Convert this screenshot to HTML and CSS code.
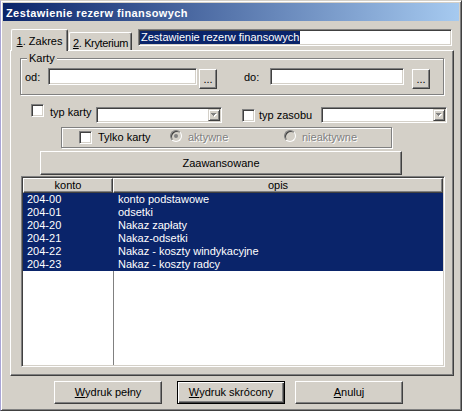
FILE: index.html
```html
<!DOCTYPE html>
<html lang="pl">
<head>
<meta charset="utf-8">
<title>Zestawienie rezerw finansowych</title>
<link rel="stylesheet" href="styles.css">
</head>
<body>
<div class="window">
  <div class="titlebar">Zestawienie rezerw finansowych</div>

  <div class="tabrow">
    <div class="tab tab-active"><span class="u">1</span>. Zakres</div>
    <div class="tab tab-second"><span class="u">2</span>. Kryterium</div>
    <div class="edit title-edit"><span class="sel">Zestawienie rezerw finansowych</span></div>
  </div>

  <div class="panel">
    <fieldset class="group">
      <legend>Karty</legend>
      <div class="range">
        <span class="lbl lbl-od">od:</span>
        <div class="edit field-od"></div>
        <div class="btn btn-dots">...</div>
        <span class="lbl lbl-do">do:</span>
        <div class="edit field-do"></div>
        <div class="btn btn-dots btn-dots2">...</div>
      </div>
    </fieldset>

    <div class="filters">
      <span class="check cb-karty"></span>
      <span class="lbl lbl-typkarty">typ karty</span>
      <div class="combo">
        <span class="drop"><svg width="6" height="4" viewBox="0 0 6 4" shape-rendering="crispEdges"><path d="M1 1h5v1H1zM2 2h3v1H2zM3 3h1v1H3z" fill="#fff"/><path d="M0 0h5v1H0zM1 1h3v1H1zM2 2h1v1H2z" fill="#808080"/></svg></span>
      </div>
      <span class="check cb-zasob"></span>
      <span class="lbl lbl-typzasobu">typ zasobu</span>
      <div class="combo">
        <span class="drop"><svg width="6" height="4" viewBox="0 0 6 4" shape-rendering="crispEdges"><path d="M1 1h5v1H1zM2 2h3v1H2zM3 3h1v1H3z" fill="#fff"/><path d="M0 0h5v1H0zM1 1h3v1H1zM2 2h1v1H2z" fill="#808080"/></svg></span>
      </div>
    </div>

    <div class="only">
      <span class="check cb-only"></span>
      <span class="lbl lbl-only">Tylko karty</span>
      <span class="radio on"></span>
      <span class="lbl dis lbl-akt">aktywne</span>
      <span class="radio"></span>
      <span class="lbl dis lbl-nieakt">nieaktywne</span>
    </div>

    <div class="btn btn-adv">Zaawansowane</div>

    <div class="list">
      <div class="lhead">
        <div class="lh lh-konto">konto</div>
        <div class="lh lh-opis">opis</div>
      </div>
      <div class="lbody">
        <div class="row"><span class="c1">204-00</span><span class="c2">konto podstawowe</span></div>
        <div class="row"><span class="c1">204-01</span><span class="c2">odsetki</span></div>
        <div class="row"><span class="c1">204-20</span><span class="c2">Nakaz zapłaty</span></div>
        <div class="row"><span class="c1">204-21</span><span class="c2">Nakaz-odsetki</span></div>
        <div class="row"><span class="c1">204-22</span><span class="c2">Nakaz - koszty windykacyjne</span></div>
        <div class="row"><span class="c1">204-23</span><span class="c2">Nakaz - koszty radcy</span></div>
      </div>
    </div>
  </div>

  <div class="actions">
    <div class="btn btn-act"><span><span class="u">W</span>ydruk pełny</span></div>
    <div class="btn btn-act btn-default btn-mid"><span><span class="u">W</span>ydruk skrócony</span></div>
    <div class="btn btn-act btn-last"><span><span class="u">A</span>nuluj</span></div>
  </div>
</div>
</body>
</html>
```

FILE: styles.css
```css
* { box-sizing: border-box; }

html, body {
  margin: 0;
  padding: 0;
}

body {
  background: #d4d0c8;
  font-family: "Liberation Sans", Arial, sans-serif;
  font-size: 11px;
  line-height: 13px;
  color: #000;
}

.window {
  width: 462px;
  height: 411px;
  overflow: hidden;
  background: #d4d0c8;
  border: 1px solid;
  border-color: #d4d0c8 #404040 #404040 #a9a5d6;
  box-shadow: inset 1px 1px 0 #fff, inset -1px -1px 0 #808080;
  padding: 2px;
}

.titlebar {
  height: 18px;
  padding: 4px 0 0 3px;
  background: linear-gradient(to right, #0a246a, #a6caf0);
  color: #fff;
  font-weight: bold;
  letter-spacing: 0.4px;
  white-space: nowrap;
}

.u { text-decoration: underline; }

/* tabs */
.tabrow {
  display: flex;
  align-items: flex-start;
  height: 21px;
  margin-top: 8px;
  padding-left: 8px;
}

.tab {
  width: 63px;
  height: 18px;
  margin-top: 3px;
  padding-top: 4px;
  text-align: center;
  white-space: nowrap;
  background: #d4d0c8;
  border: 1px solid;
  border-bottom: none;
  border-color: #fff #404040 #fff #fff;
  border-radius: 2px 2px 0 0;
  box-shadow: inset -1px 0 0 #808080;
}

.tab-active {
  position: relative;
  z-index: 1;
  width: 57px;
  height: 22px;
  margin-top: 0;
  margin-bottom: -1px;
  padding-top: 5px;
}

.tab-second {
  margin-left: 1px;
  letter-spacing: -0.35px;
}

/* edit fields */
.edit {
  flex: none;
  background: #fff;
  border: 1px solid;
  border-color: #808080 #fff #fff #808080;
  box-shadow: inset 1px 1px 0 #404040, inset -1px -1px 0 #d4d0c8;
}

.title-edit {
  width: 314px;
  height: 17px;
  margin-left: 6px;
  padding: 1px 0 0 1px;
  white-space: nowrap;
}

.sel {
  display: inline-block;
  vertical-align: top;
  padding: 0 1px;
  background: #0a246a;
  color: #fff;
}

/* panel */
.panel {
  width: 444px;
  height: 326px;
  margin-left: 7px;
  border: 1px solid;
  border-color: #fff #404040 #404040 #fff;
  box-shadow: inset -1px -1px 0 #808080;
}

.group {
  width: 424px;
  min-width: 0;
  margin: 1px 0 0 9px;
  padding: 3px 0 5px 4px;
  border: 1px solid #808080;
  box-shadow: inset 1px 1px 0 #fff, 1px 1px 0 #fff;
}

.group legend {
  margin-left: 2px;
  padding: 0 2px;
  background: #d4d0c8;
}

.range {
  display: flex;
  align-items: flex-start;
  height: 21px;
}

.lbl { flex: none; white-space: nowrap; font-weight: normal; }

.lbl-od { width: 23px; margin-top: 3px; }
.field-od { width: 149px; height: 17px; }
.lbl-do { width: 26px; margin: 3px 0 0 27px; }
.field-do { width: 134px; height: 17px; }

.btn {
  flex: none;
  display: flex;
  align-items: center;
  justify-content: center;
  white-space: nowrap;
  background: #d4d0c8;
  border: 1px solid;
  border-color: #fff #404040 #404040 #fff;
  box-shadow: inset -1px -1px 0 #808080;
}

.btn-dots {
  width: 18px;
  height: 20px;
  margin: 1px 0 0 2px;
}

.btn-dots2 { margin-left: 8px; }

/* filters row */
.filters {
  display: flex;
  align-items: flex-start;
  height: 20px;
  margin-top: 9px;
}

.check {
  flex: none;
  width: 13px;
  height: 13px;
  background: #fff;
  border: 1px solid;
  border-color: #808080 #fff #fff #808080;
  box-shadow: inset 1px 1px 0 #404040, inset -1px -1px 0 #d4d0c8;
}

.cb-karty { margin-left: 20px; }
.lbl-typkarty { width: 46px; margin: 2px 0 0 6px; }

.combo {
  flex: none;
  display: flex;
  justify-content: flex-end;
  width: 126px;
  height: 16px;
  margin-top: 3px;
  padding: 1px;
  background: #fff;
  border: 1px solid;
  border-color: #808080 #fff #fff #808080;
  box-shadow: inset 1px 1px 0 #404040, inset -1px -1px 0 #d4d0c8;
}

.drop {
  display: flex;
  align-items: center;
  justify-content: center;
  width: 12px;
  height: 12px;
  background: #d4d0c8;
  border: 1px solid;
  border-color: #d4d0c8 #404040 #404040 #d4d0c8;
  box-shadow: inset 1px 1px 0 #fff, inset -1px -1px 0 #808080;
}

.drop svg { display: block; }

.cb-zasob { margin: 5px 0 0 20px; }
.lbl-typzasobu { width: 62px; margin: 5px 0 0 4px; }

/* only frame */
.only {
  display: flex;
  align-items: flex-start;
  width: 331px;
  height: 21px;
  margin: 3px 0 0 50px;
  padding-top: 3px;
  border: 1px solid #808080;
  box-shadow: inset 1px 1px 0 #fff, 1px 1px 0 #fff;
}

.cb-only { margin-left: 17px; }
.lbl-only { width: 72px; margin-left: 6px; }
.lbl-akt { width: 96px; margin-left: 6px; }
.lbl-nieakt { margin-left: 6px; }

.dis {
  color: #808080;
  text-shadow: 1px 1px 0 #fff;
}

.radio {
  flex: none;
  display: flex;
  align-items: center;
  justify-content: center;
  width: 12px;
  height: 12px;
  margin-top: -1px;
  border-radius: 50%;
  background: #d4d0c8;
  border: 1px solid;
  border-color: #808080 #fff #fff #808080;
  box-shadow: inset 1px 1px 0 #404040, inset -1px -1px 0 #d4d0c8;
}

.radio.on::after {
  content: "";
  width: 4px;
  height: 4px;
  border-radius: 50%;
  background: #808080;
}

.btn-adv {
  width: 362px;
  height: 24px;
  margin: 3px 0 0 29px;
}

/* list */
.list {
  display: flex;
  flex-direction: column;
  width: 424px;
  height: 191px;
  margin: 1px 0 0 10px;
  padding: 1px;
  background: #fff;
  border: 1px solid;
  border-color: #808080 #fff #fff #808080;
  box-shadow: inset 1px 1px 0 #404040, inset -1px -1px 0 #d4d0c8;
}

.lhead {
  display: flex;
  flex: none;
  height: 15px;
}

.lh {
  text-align: center;
  background: #d4d0c8;
  border: 1px solid;
  border-color: #fff #404040 #404040 #fff;
  box-shadow: inset -1px -1px 0 #808080;
}

.lh-konto { width: 90px; flex: none; }
.lh-opis { flex: 1; }

.lbody {
  flex: 1;
  background: linear-gradient(to right, transparent 90px, #808080 90px, #808080 91px, transparent 91px) #fff;
}

.row {
  display: flex;
  height: 13px;
  background: #0a246a;
  color: #fff;
  white-space: nowrap;
}

.c1 { width: 90px; flex: none; padding-left: 4px; }
.c2 { padding-left: 5px; }

/* bottom buttons */
.actions {
  display: flex;
  margin: 5px 0 0 51px;
}

.btn-act {
  width: 108px;
  height: 23px;
}

.btn-mid { margin-left: 15px; }
.btn-last { margin-left: 10px; }

.btn-default {
  border: 1px solid #000;
  box-shadow: inset 1px 1px 0 #fff, inset -1px -1px 0 #404040, inset -2px -2px 0 #808080;
}
```
